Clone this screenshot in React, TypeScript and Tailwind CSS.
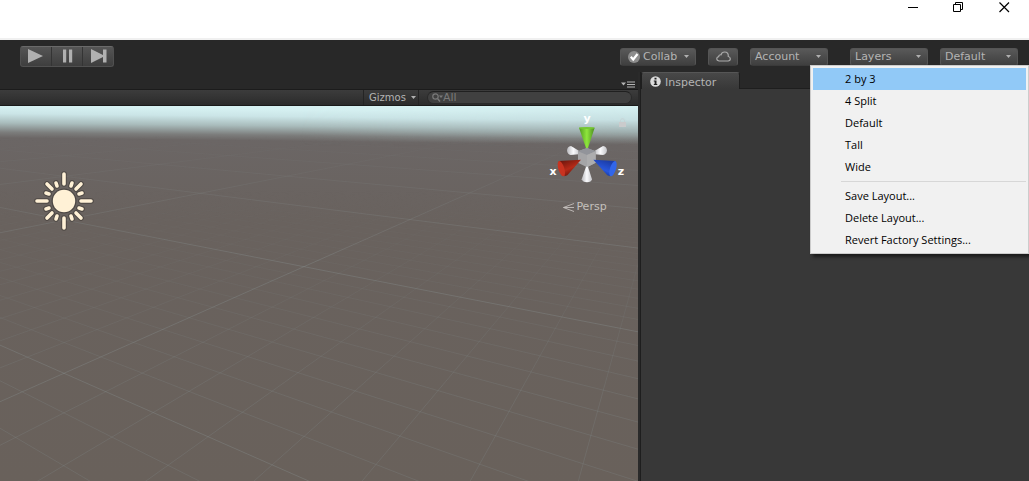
import type { ReactNode } from "react";

const uiFont = "font-['DejaVu_Sans',sans-serif]";

/* ---------- Scene grid ---------- */

type Point = [number, number];

// Perspective projection of a ground-plane cell (u, v) into scene space.
function project(u: number, v: number): Point {
  const w = 0.632 * u + 0.624 * v + 1;
  return [(432.1 * u - 350.5 * v + 64) / w, (61.9 * u + 61.1 * v + 373.3) / w];
}

function groundLine(axis: "u" | "v", at: number, far: number): string {
  const near = axis === "u" ? (0.3 - 1 - 0.632 * at) / 0.624 : (0.3 - 1 - 0.624 * at) / 0.632;
  const [x1, y1] = axis === "u" ? project(at, near) : project(near, at);
  const [x2, y2] = axis === "u" ? project(at, far) : project(far, at);
  return `M${x1.toFixed(1)} ${y1.toFixed(1)}L${x2.toFixed(1)} ${y2.toFixed(1)}`;
}

const minorLines: string[] = [];
for (let i = -20; i <= 30; i++) {
  if (i % 10 !== 0) {
    minorLines.push(groundLine("u", i / 10, 12), groundLine("v", i / 10, 12));
  }
}
const majorLines: string[] = [];
for (let i = -3; i <= 9; i++) {
  majorLines.push(groundLine("u", i, 40), groundLine("v", i, 40));
}

function SceneView() {
  return (
    <svg
      className="absolute inset-0 h-full w-full"
      viewBox="0 106 638 375"
      preserveAspectRatio="xMidYMin slice"
      role="img"
      aria-label="Scene"
    >
      <defs>
        <linearGradient id="ground" x1="0" y1="106" x2="-4" y2="481" gradientUnits="userSpaceOnUse">
          <stop offset="0" stopColor="#d6f1f2" />
          <stop offset="0.02" stopColor="#cbe5e7" />
          <stop offset="0.045" stopColor="#a9bcbc" />
          <stop offset="0.07" stopColor="#7c7d7c" />
          <stop offset="0.085" stopColor="#6b6665" />
          <stop offset="0.3" stopColor="#69625e" />
          <stop offset="1" stopColor="#69615b" />
        </linearGradient>
        <linearGradient id="sky" x1="0" y1="106" x2="0" y2="146" gradientUnits="userSpaceOnUse">
          <stop offset="0" stopColor="#d6f1f2" />
          <stop offset="0.35" stopColor="#c6dfe1" />
          <stop offset="0.65" stopColor="#9fafaf" />
          <stop offset="1" stopColor="#6d6867" stopOpacity="0" />
        </linearGradient>
        <linearGradient id="skyFade" x1="300" y1="0" x2="638" y2="0" gradientUnits="userSpaceOnUse">
          <stop offset="0" stopColor="#000" />
          <stop offset="1" stopColor="#fff" />
        </linearGradient>
        <mask id="skyMask" maskUnits="userSpaceOnUse" x="0" y="106" width="638" height="40">
          <rect y="106" width="638" height="40" fill="url(#skyFade)" />
        </mask>
        <linearGradient id="minorFade" x1="0" y1="190" x2="0" y2="400" gradientUnits="userSpaceOnUse">
          <stop offset="0" stopColor="#000" />
          <stop offset="1" stopColor="#fff" />
        </linearGradient>
        <linearGradient id="majorFade" x1="0" y1="135" x2="0" y2="260" gradientUnits="userSpaceOnUse">
          <stop offset="0" stopColor="#000" />
          <stop offset="0.5" stopColor="#888" />
          <stop offset="1" stopColor="#fff" />
        </linearGradient>
        <mask id="minorMask" maskUnits="userSpaceOnUse" x="0" y="106" width="638" height="375">
          <rect y="106" width="638" height="375" fill="url(#minorFade)" />
        </mask>
        <mask id="majorMask" maskUnits="userSpaceOnUse" x="0" y="106" width="638" height="375">
          <rect y="106" width="638" height="375" fill="url(#majorFade)" />
        </mask>
      </defs>
      <rect x="-600" y="106" width="1900" height="900" fill="url(#ground)" />
      <rect y="106" width="638" height="40" fill="url(#sky)" mask="url(#skyMask)" />
      <g mask="url(#minorMask)">
        <path d={minorLines.join("")} stroke="#80898a" strokeOpacity="0.28" fill="none" />
      </g>
      <g mask="url(#majorMask)">
        <path d={majorLines.join("")} stroke="#8d9694" strokeOpacity="0.32" fill="none" />
      </g>
      <SunGizmo />
    </svg>
  );
}

function SunGizmo() {
  const rays =
    "M0-27V-17M0 27V17M-27 0H-17M27 0H17" +
    "M-17-17L-12-12M17-17L12-12M-17 17L-12 12M17 17L12 12" +
    "M-8-18L-7-15M8-18L7-15M-8 18L-7 15M8 18L7 15" +
    "M-18-8L-15-7M18-8L15-7M-18 8L-15 7M18 8L15 7";
  return (
    <g transform="translate(64 201)" strokeLinecap="round">
      <g opacity="0.45">
        <path d={rays} stroke="#2c2723" strokeWidth="5.600" />
        <circle r="12.500" fill="#2c2723" />
      </g>
      <path d={rays} stroke="#fff1d6" strokeWidth="3.600" />
      <circle r="11.200" fill="#fff1d6" />
    </g>
  );
}

function AxisGizmo() {
  return (
    <svg className="h-20 w-20" viewBox="0 -6 80 80" role="img" aria-label="Orientation">
      <defs>
        <linearGradient id="gy" x1="0" x2="1" y1="0" y2="0">
          <stop offset="0" stopColor="#4f9a20" />
          <stop offset="0.5" stopColor="#8fe63c" />
          <stop offset="1" stopColor="#4c8b22" />
        </linearGradient>
        <linearGradient id="gx" x1="0" x2="0.6" y1="0" y2="1">
          <stop offset="0.1" stopColor="#6d160d" />
          <stop offset="0.6" stopColor="#b52a18" />
          <stop offset="1" stopColor="#5b120b" />
        </linearGradient>
        <linearGradient id="gz" x1="0.5" x2="0" y1="0" y2="1">
          <stop offset="0" stopColor="#1c3da8" />
          <stop offset="0.5" stopColor="#2857dd" />
          <stop offset="1" stopColor="#0c1d5c" />
        </linearGradient>
        <linearGradient id="gw" x1="0" x2="1" y1="0" y2="0">
          <stop offset="0" stopColor="#b9b9bd" />
          <stop offset="0.5" stopColor="#fafafc" />
          <stop offset="1" stopColor="#c4c4c8" />
        </linearGradient>
      </defs>
      <g transform="scale(0.33333) translate(-45 -26)">
        <path d="M145 147L122 149Q112 146 111 136Q111 124 123 122L149 138Z" fill="url(#gw)" />
        <path d="M196 147L219 149Q229 146 231 136Q231 124 219 122L192 138Z" fill="url(#gw)" />
        <path d="M171 128L197 138V172L171 186L144 172V138Z" fill="#a5a5a7" />
        <path d="M171 128L197 138L171 149L144 138Z" fill="#92949a" />
        <path d="M171 149L197 138V172L171 186Z" fill="#adadae" />
        <path d="M147 67H194L174 128H168Z" fill="url(#gy)" />
        <ellipse cx="170.500" cy="68" rx="23.500" ry="3" fill="#76c832" />
        <path d="M153 163L86 167L104 213L112 210Z" fill="url(#gx)" />
        <ellipse cx="94" cy="190" rx="9" ry="24" transform="rotate(-17 94 190)" fill="#c83320" />
        <path d="M190 163L256 167L240 213L232 210Z" fill="url(#gz)" />
        <ellipse cx="249" cy="190" rx="9" ry="24" transform="rotate(17 249 190)" fill="#3166ea" />
        <path d="M168 184H174L186 222Q184 231 171 231Q158 231 155 222Z" fill="url(#gw)" />
      </g>
      <g className="fill-white font-['DejaVu_Sans',sans-serif] text-[11px] font-bold" textAnchor="middle">
        <text x="42" y="8">y</text>
        <text x="8" y="61">x</text>
        <text x="76" y="61">z</text>
      </g>
    </svg>
  );
}

/* ---------- Toolbar pieces ---------- */

function Caret() {
  return (
    <svg className="h-[3px] w-[5px] shrink-0" viewBox="0 0 5 3" aria-hidden="true">
      <path d="M0 0H5L2.500 3Z" fill="#b0b0b0" />
    </svg>
  );
}

function BarButton({ label, className, children }: { label: string; className: string; children: ReactNode }) {
  return (
    <button
      type="button"
      aria-label={label}
      className={`flex h-[18px] items-center rounded-[3px] border border-[#555] border-b-[#3a3a3a] bg-linear-to-b from-[#595959] to-[#3f3f3f] text-[11px] leading-4 text-[#b4b4b4] ${className}`}
    >
      {children}
    </button>
  );
}

function PlayControls() {
  const cell = "flex h-[19px] items-center justify-center";
  return (
    <div className="flex overflow-hidden rounded-[3px] border border-[#505050] border-t-[#6a6a6a] bg-linear-to-b from-[#555] to-[#3e3e3e]">
      <button type="button" aria-label="Play" className={`${cell} w-[30px] pr-[2px]`}>
        <svg className="h-[14px] w-4" viewBox="0 0 16 14" aria-hidden="true">
          <path d="M1 0L16 7L1 14Z" fill="#b0b0b0" />
        </svg>
      </button>
      <button type="button" aria-label="Pause" className={`${cell} w-8 border-x border-x-[#343434] pl-[2px]`}>
        <svg className="h-[14px] w-[10px]" viewBox="0 0 10 14" aria-hidden="true">
          <path d="M0 0.500H3.200V13.500H0ZM6 0.500H9.200V13.500H6Z" fill="#b0b0b0" />
        </svg>
      </button>
      <button type="button" aria-label="Step" className={`${cell} w-[30px] pl-[2px]`}>
        <svg className="h-[14px] w-4" viewBox="0 0 16 14" aria-hidden="true">
          <path d="M0 0L12 6V0.500H15.500V13.500H12V8L0 14Z" fill="#b0b0b0" />
        </svg>
      </button>
    </div>
  );
}

function TitleBar() {
  return (
    <header className="flex h-10 items-start justify-end border-b-2 border-[#f0f0f0] bg-white pr-[2px]">
      <button type="button" aria-label="Minimize" className="flex h-[14px] w-[46px] items-center justify-center">
        <svg className="h-[11px] w-[11px]" viewBox="0 0 11 11" shapeRendering="crispEdges" aria-hidden="true">
          <path d="M1 5H11V6H1Z" fill="#000" />
        </svg>
      </button>
      <button type="button" aria-label="Restore" className="flex h-[14px] w-[46px] items-center justify-center">
        <svg className="h-[11px] w-[11px]" viewBox="0 0 11 11" fill="none" stroke="#000" aria-hidden="true">
          <path d="M0.500 2.500H7.500V9.500H0.500ZM2.500 2.500V0.500H9.500V7.500H7.500" />
        </svg>
      </button>
      <button type="button" aria-label="Close" className="flex h-[14px] w-[46px] items-center justify-center">
        <svg className="h-[11px] w-[11px]" viewBox="0 0 11 11" fill="none" stroke="#000" aria-hidden="true">
          <path d="M0.500 0.500L10 10M10 0.500L0.500 10" strokeWidth="1.200" />
        </svg>
      </button>
    </header>
  );
}

const layouts = ["2 by 3", "4 Split", "Default", "Tall", "Wide"];
const layoutActions = ["Save Layout...", "Delete Layout...", "Revert Factory Settings..."];

function LayoutMenu() {
  const item = "block h-[22px] w-full pl-8 text-left";
  return (
    <div
      role="menu"
      className="absolute top-[25px] right-0 z-10 w-[219px] border border-[#ccc] bg-[#f1f1f1] p-[2px] font-['Open_Sans',sans-serif] text-[11px] leading-[22px] text-black shadow-[3px_3px_3px_rgba(0,0,0,0.5)]"
    >
      {layouts.map((name, i) => (
        <button key={name} type="button" role="menuitem" className={`${item} ${i === 0 ? "bg-[#91c9f7]" : ""}`}>
          {name}
        </button>
      ))}
      <hr className="my-[3px] ml-7 border-[#d7d7d7]" />
      {layoutActions.map((name) => (
        <button key={name} type="button" role="menuitem" className={item}>
          {name}
        </button>
      ))}
    </div>
  );
}

function MainToolbar() {
  return (
    <div className="relative flex h-8 items-center justify-between bg-[#282828] pr-[11px] pl-5">
      <PlayControls />
      <div className="flex pt-px">
        <BarButton label="Collab" className="w-[76px] gap-[3px] pl-[7px]">
          <svg className="h-3 w-3" viewBox="0 0 12 12" aria-hidden="true">
            <circle cx="6" cy="6" r="6" fill="#8c8c8c" />
            <path d="M2.800 5.800L5.200 8.500L9.500 3" stroke="#fff" strokeWidth="2.200" fill="none" />
          </svg>
          <span className="pr-1">Collab</span>
          <Caret />
        </BarButton>
        <BarButton label="Cloud services" className="ml-3 w-[30px] justify-center">
          <svg className="h-[11px] w-[15px]" viewBox="0 0 15 11" aria-hidden="true">
            <path
              d="M3 10H12Q14.300 9.800 14.300 7.700Q14.200 5.800 12.300 5.500Q12.600 1 8.600 1Q5.800 1 5 3.800Q2.900 3.500 2.700 5.600Q0.700 6 0.700 7.900Q0.900 9.800 3 10Z"
              fill="none"
              stroke="#ababab"
              strokeWidth="1.200"
            />
          </svg>
        </BarButton>
        <BarButton label="Account" className="ml-3 w-[78px] justify-between pr-[6px] pl-1">
          <span>Account</span>
          <Caret />
        </BarButton>
        <BarButton label="Layers" className="ml-[22px] w-[78px] justify-between pr-[6px] pl-1">
          <span>Layers</span>
          <Caret />
        </BarButton>
        <BarButton label="Layout" className="ml-3 w-[78px] justify-between pr-[6px] pl-1">
          <span>Default</span>
          <Caret />
        </BarButton>
      </div>
      <LayoutMenu />
    </div>
  );
}

/* ---------- Panels ---------- */

function ScenePanel() {
  return (
    <section className="flex min-w-0 flex-[638] flex-col">
      <div className="flex h-[17px] items-center justify-end pr-[3px]">
        <button type="button" aria-label="Panel options" className="pt-2">
          <svg className="h-[7px] w-[14px]" viewBox="0 0 14 7" aria-hidden="true">
            <path d="M0 1.500H5L2.500 4.500ZM6 0.500H14V1.500H6ZM6 3H14V4H6ZM6 5.500H14V6.500H6Z" fill="#b4b4b4" />
          </svg>
        </button>
      </div>
      <div className="flex h-[17px] items-stretch justify-end border-y border-t-[#1c1c1c] border-b-[#1a1a1a] bg-linear-to-b from-[#3c3c3c] to-[#2b2b2b] pr-[6px] text-[10px] leading-[15px] text-[#b4b4b4]">
        <button type="button" className="flex w-14 items-center justify-between border-x border-[#242424] pr-[2px] pl-[5px]">
          <span>Gizmos</span>
          <Caret />
        </button>
        <label className="my-px ml-2 flex w-[205px] items-center rounded-full border border-[#2a2a2a] border-t-[#202020] bg-[#404040] pl-1">
          <svg className="h-[9px] w-[11px] shrink-0" viewBox="0 0 11 9" aria-hidden="true">
            <circle cx="3.500" cy="3.500" r="2.700" fill="none" stroke="#7a7a7a" strokeWidth="1.200" />
            <path d="M5.500 5.500L8 8.500" stroke="#7a7a7a" strokeWidth="1.400" />
            <path d="M7 2.500H11L9 5Z" fill="#7a7a7a" />
          </svg>
          <input
            type="search"
            aria-label="Search scene"
            placeholder="All"
            className="h-3 min-w-0 flex-1 bg-transparent text-[11px] leading-3 outline-none placeholder:text-[#7a7a7a]"
          />
        </label>
      </div>
      <div className="relative flex-1 overflow-hidden">
        <SceneView />
        <div className="absolute top-[2px] right-[13px] flex w-20 flex-col items-center">
          <AxisGizmo />
          <button type="button" className="mt-[11px] flex items-center gap-[2px] text-[11px] leading-4 text-[#c4c0bc]">
            <svg className="h-[9px] w-[11px]" viewBox="0 0 11 9" fill="none" stroke="#c4c0bc" aria-hidden="true">
              <path d="M11 0.500L0.500 4.500L11 8.500M0.500 4.500H11" strokeWidth="0.900" />
            </svg>
            <span>Persp</span>
          </button>
        </div>
        <button type="button" aria-label="Lock rotation" className="absolute top-3 right-3 block">
          <svg className="h-[9px] w-[7px]" viewBox="0 0 7 9" aria-hidden="true">
            <path d="M1.500 4V2.500Q1.500 0.700 3.500 0.700Q5.500 0.700 5.500 2.500V4" fill="none" stroke="#c6cccd" strokeOpacity="0.500" />
            <rect y="4" width="7" height="5" fill="#cacbcc" />
          </svg>
        </button>
      </div>
    </section>
  );
}

function InspectorPanel() {
  return (
    <section className="flex min-w-0 flex-[388] flex-col">
      <div className="flex h-[17px] items-end">
        <h2 className="flex h-[17px] w-[99px] items-center gap-1 rounded-t-[3px] border border-b-0 border-[#1e1e1e] border-t-[#565656] bg-linear-to-b from-[#484848] to-[#383838] pl-2 text-[11px] leading-4 text-[#b4b4b4]">
          <svg className="h-[11px] w-[11px]" viewBox="0 0 11 11" aria-hidden="true">
            <circle cx="5.500" cy="5.500" r="5.300" fill="#dcdcdc" />
            <path d="M4.500 1.800H6.500V3.500H4.500ZM3.800 4.500H6.500V8H7.300V9H3.800V8H4.600V5.500H3.800Z" fill="#222" />
          </svg>
          <span className="pt-[3px]">Inspector</span>
        </h2>
        <div className="h-px flex-1 bg-[#1e1e1e]" />
      </div>
      <div className="flex-1 bg-[#383838]" />
    </section>
  );
}

export default function App() {
  return (
    <div className={`flex min-h-screen flex-col bg-[#282828] ${uiFont}`}>
      <TitleBar />
      <MainToolbar />
      <main className="flex flex-1">
        <ScenePanel />
        <div className="w-[3px] border-r border-[#1e1e1e] bg-[#2a2a2a]" />
        <InspectorPanel />
      </main>
    </div>
  );
}
